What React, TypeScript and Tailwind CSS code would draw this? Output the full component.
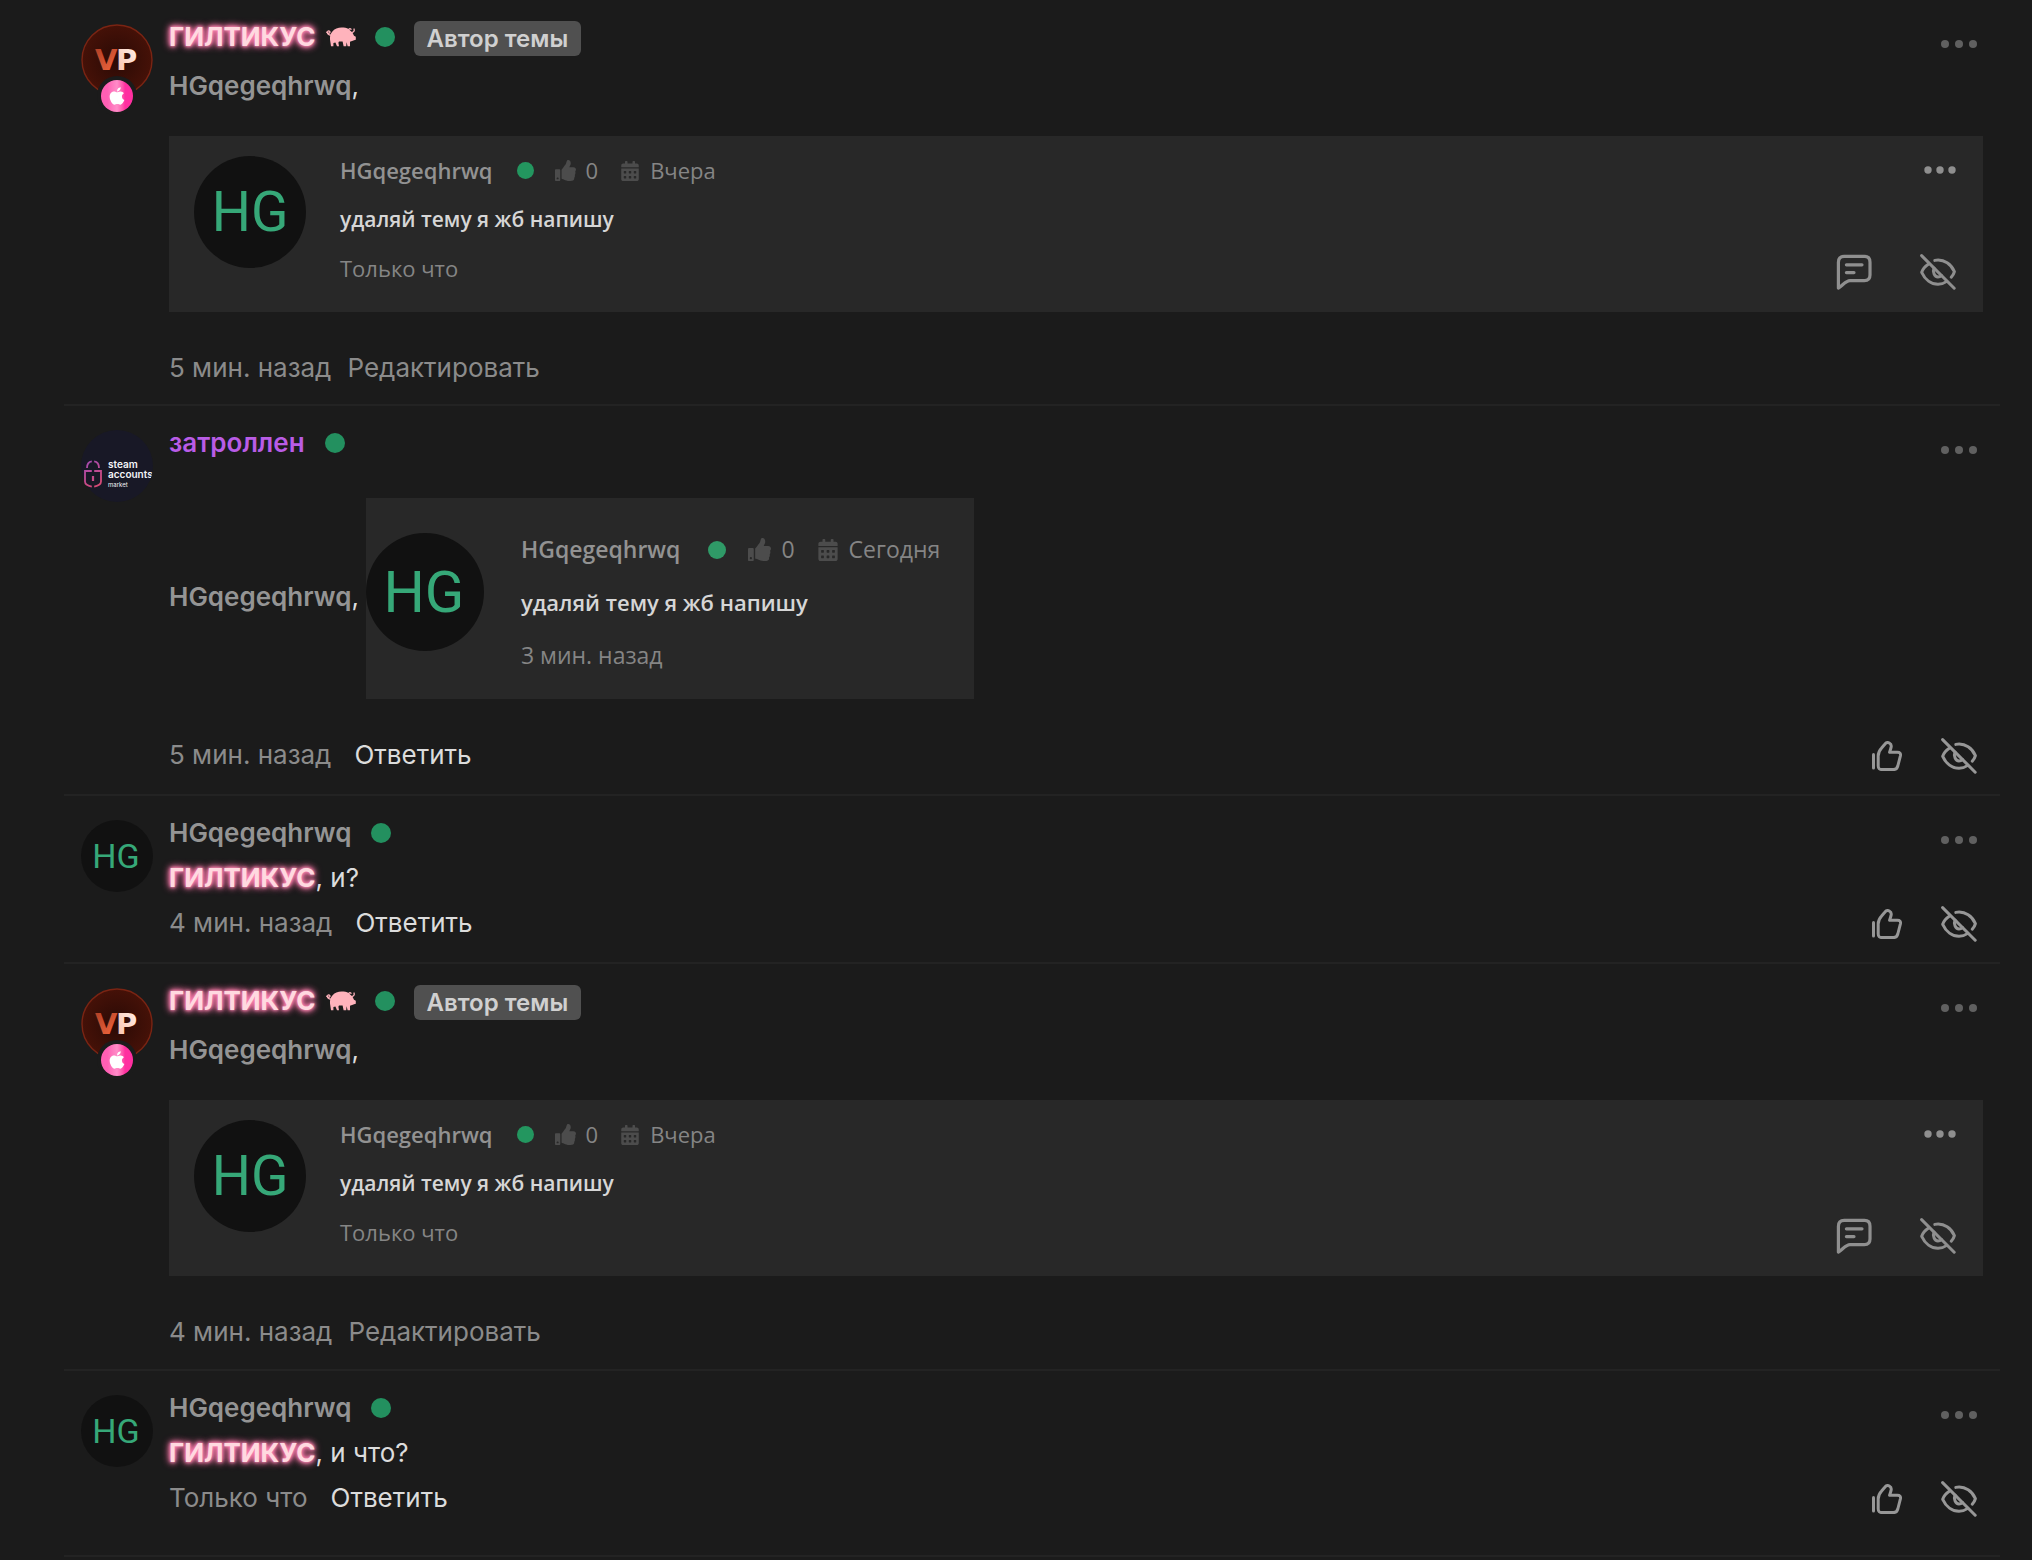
import React from "react";
import { FaApple, FaCalendarAlt, FaThumbsUp } from "react-icons/fa";

function EyeOffIcon() {
  return (
    <svg viewBox="0 0 36 36" className="size-9" fill="none" stroke="currentColor" strokeWidth="3" strokeLinecap="round" strokeLinejoin="round" aria-hidden="true">
      <path d="M1.6 1.6 34.2 34.2" />
      <path d="M14.8 6.4C24.5 4.6 31.5 11 34.4 17.6C34 19.5 32.8 21.4 31.2 23.2" />
      <path d="M8.6 10C5.3 12.2 2.6 15.4 1.7 18.3C5 25.6 11.2 30.2 18 30.2C21.3 30.2 24.3 29.2 26.8 27.4" />
      <path d="M14 14.2C12.4 17.8 14.4 22.9 18 22.9C19.5 22.9 20.6 22.4 21.6 21.6" />
    </svg>
  );
}

function ThumbIcon() {
  return (
    <svg viewBox="0 0 30 30" className="size-[30px]" fill="none" stroke="currentColor" strokeWidth="3" strokeLinecap="round" strokeLinejoin="round" aria-hidden="true">
      <path d="M1.5 13.5V27" />
      <path d="M6.2 15C6.2 11.5 7.2 9.6 9.6 7L13 3C14.2 1.5 15.8 1.2 17.3 2C19.2 3 19.6 4.6 19 6.8L17.6 11.2H25.4C27.9 11.2 28.9 12.4 28.4 14.8L25.8 25C25 27.8 24 28.6 21.4 28.6H10.4C7.4 28.6 6.2 27.6 6.2 24.8Z" />
    </svg>
  );
}

function MessageIcon() {
  return (
    <svg viewBox="0 0 36 36" className="size-9" fill="none" stroke="currentColor" strokeWidth="3.2" strokeLinecap="round" strokeLinejoin="round" aria-hidden="true">
      <path d="M2.4 34V8.4C2.4 4.4 4.4 2.4 8.2 2.4H28.4C32.2 2.4 34 4.4 34 8.2V21C34 24.8 32.2 26.6 28.4 26.6H14C9.6 26.6 6.4 31.8 2.4 34Z" />
      <path d="M10.4 10.8H26M10.4 18.6H18" />
    </svg>
  );
}

function DotsIcon() {
  return (
    <svg viewBox="0 0 36 8" className="h-2 w-9" fill="currentColor" aria-hidden="true">
      <circle cx="4" cy="4" r="4" />
      <circle cx="18" cy="4" r="4" />
      <circle cx="32" cy="4" r="4" />
    </svg>
  );
}

function PigIcon() {
  return (
    <svg viewBox="0 0 30 20" className="h-5 w-[30px] shrink-0" fill="#ffb3bc" aria-hidden="true">
      <path d="M6 5C8.5 1.8 12 .6 15.6.6C18.4.6 20.6 1 22.6 2L24.4 3.8L26.4 5.6L28 8.8L29.8 9.8V12.8L27.4 13.6L24 14.8V19.2H21.6L20.6 15.2L20.2 19.2H17.6L16.6 14.4H13L12.4 15.8L13 19.2H11L9.4 15.4L7.4 16V19.2H5L4 12.6C3.8 9.4 4.4 7 6 5Z" />
      <path d="M5.6 8C3 8.6.8 6.6 1.6 4.8C2.4 3.2 4.6 4.2 3.8 5.6C3.2 6.6 1.4 6.2.6 5.2M22.4 3.4C22.6 1.8 24 1.2 25 2.2M26.2 5.4C27.8 5.2 28.6 3.8 28 2" fill="none" stroke="#ffb3bc" strokeWidth="1.3" strokeLinecap="round" />
    </svg>
  );
}

function OnlineDot() {
  return <span className="block size-5 shrink-0 rounded-full bg-[#23905f]" role="img" aria-label="В сети" />;
}

function HgAvatar() {
  return (
    <a href="#hg" className="flex size-[72px] items-center justify-center rounded-full bg-[#111111] pr-0.5 font-['Roboto',sans-serif] text-[34px] text-[#36a878]">
      HG
    </a>
  );
}

function VpAvatar() {
  return (
    <a href="#giltikus" aria-label="ГИЛТИКУС" className="relative block size-[72px]">
      <svg viewBox="0 0 72 72" className="size-[72px]" aria-hidden="true">
        <defs>
          <radialGradient id="vpBack" cx="50%" cy="50%" r="55%">
            <stop offset="0" stopColor="#2a0a05" />
            <stop offset="1" stopColor="#481208" />
          </radialGradient>
          <linearGradient id="vpV" x1="0" y1="0" x2="0.6" y2="1">
            <stop offset="0" stopColor="#a83a22" />
            <stop offset="1" stopColor="#f0663e" />
          </linearGradient>
          <linearGradient id="vpP" x1="0" y1="1" x2="1" y2="0">
            <stop offset="0" stopColor="#f9bda6" />
            <stop offset="1" stopColor="#fff3ee" />
          </linearGradient>
        </defs>
        <circle cx="36" cy="36" r="35" fill="url(#vpBack)" stroke="#7a2413" strokeWidth="1.4" />
        <g fontFamily="DejaVu Sans" fontWeight="700" fontSize="29">
          <text x="14" y="46" fill="url(#vpV)">V</text>
          <text x="35" y="46" fill="url(#vpP)">P</text>
        </g>
      </svg>
      <span className="absolute top-[52px] left-4 flex size-10 items-center justify-center rounded-full bg-[#1b1b1b]">
        <span className="flex size-8 items-center justify-center rounded-full bg-linear-to-r from-[#ff5fb4] from-20% via-[#ff8cc8] to-[#ff2fa0] to-75% text-xl text-white">
          <FaApple aria-hidden="true" />
        </span>
      </span>
    </a>
  );
}

function SteamAvatar() {
  return (
    <a href="#zatrollen" aria-label="затроллен" className="block size-[72px]">
      <svg viewBox="0 0 72 72" className="size-[72px]" aria-hidden="true">
        <defs>
          <clipPath id="steamRound">
            <circle cx="36" cy="36" r="36" />
          </clipPath>
          <linearGradient id="steamLock" x1="3" y1="30" x2="21" y2="58" gradientUnits="userSpaceOnUse">
            <stop offset="0" stopColor="#a04bb8" />
            <stop offset="1" stopColor="#e04a6c" />
          </linearGradient>
        </defs>
        <circle cx="36" cy="36" r="36" fill="#181826" />
        <g fill="none" stroke="url(#steamLock)" strokeWidth="1.8">
          <path d="M6 38C6 34 7.8 31.8 10.8 31.4M13.2 31.4C16.2 31.8 18 34 18 38" />
          <path d="M10.8 41H4V51.6C4 53.8 6.4 55.8 10.8 56.6M13.2 41H20V51.6C20 53.8 17.6 55.8 13.2 56.6" />
          <path d="M12 46V51" strokeWidth="2.2" />
        </g>
        <g fill="#f4f4f8" fontFamily="Inter" clipPath="url(#steamRound)">
          <text x="27" y="38" fontSize="10" fontWeight="600">steam</text>
          <text x="27" y="48" fontSize="10" fontWeight="600">accounts</text>
          <text x="27" y="57" fontSize="6">market</text>
        </g>
      </svg>
    </a>
  );
}

function GlowName() {
  return (
    <a href="#giltikus" className="font-bold text-[#ffd9e0] [text-shadow:0_0_3px_#ff8fb8,0_0_5px_#ff7fae,0_0_7px_#ff78aa,0_0_9px_#f0689b]">
      ГИЛТИКУС
    </a>
  );
}

function GreyName() {
  return (
    <a href="#hg" className="font-semibold text-[#949494]">
      HGqegeqhrwq
    </a>
  );
}

function WideQuote() {
  return (
    <div className="flex gap-[34px] bg-[#282828] pt-2.5 pr-[27px] pb-[19px] pl-[25px] font-['Open_Sans','Noto_Sans',sans-serif] text-[22px]">
      <div className="mt-2.5 flex size-28 shrink-0 items-center justify-center rounded-full bg-[#111111] font-['Roboto',sans-serif] text-[55px] text-[#36a878]">HG</div>
      <div className="flex-1 leading-[49px] whitespace-nowrap text-[#858585]">
        <div className="flex items-center">
          <span className="font-semibold text-[#929292]">HGqegeqhrwq</span>
          <span className="ml-6 size-[17px] rounded-full bg-[#23965f]" />
          <FaThumbsUp className="ml-[21px] size-[21px] text-[#4c4c4c]" aria-hidden="true" />
          <span className="ml-2.5">0</span>
          <FaCalendarAlt className="ml-[22px] size-5 text-[#4c4c4c]" aria-hidden="true" />
          <span className="ml-2.5">Вчера</span>
        </div>
        <p className="text-[21px] leading-[49px] font-semibold text-[#d6d6d6]">удаляй тему я жб напишу</p>
        <p>Только что</p>
      </div>
      <div className="flex flex-col items-end justify-between pt-5 pb-[3px] text-[#8f8f8f]">
        <svg viewBox="0 0 32 8" className="h-2 w-8" fill="currentColor" aria-hidden="true">
          <circle cx="4" cy="4" r="3.7" />
          <circle cx="16" cy="4" r="3.7" />
          <circle cx="28" cy="4" r="3.7" />
        </svg>
        <div className="flex gap-12">
          <MessageIcon />
          <EyeOffIcon />
        </div>
      </div>
    </div>
  );
}

function NarrowQuote() {
  return (
    <div className="flex w-[608px] gap-[37px] bg-[#282828] pt-[25px] pb-[17px] font-['Open_Sans','Noto_Sans',sans-serif] text-[23px]">
      <div className="mt-2.5 flex size-[118px] shrink-0 items-center justify-center rounded-full bg-[#111111] pr-0.5 font-['Roboto',sans-serif] text-[58px] text-[#36a878]">HG</div>
      <div className="leading-[53px] whitespace-nowrap text-[#858585]">
        <div className="flex items-center">
          <span className="font-semibold text-[#929292]">HGqegeqhrwq</span>
          <span className="ml-7 size-[18px] rounded-full bg-[#2f9a67]" />
          <FaThumbsUp className="ml-[22px] size-[23px] text-[#4c4c4c]" aria-hidden="true" />
          <span className="ml-2.5">0</span>
          <FaCalendarAlt className="ml-[22px] size-[22px] text-[#4c4c4c]" aria-hidden="true" />
          <span className="ml-2.5">Сегодня</span>
        </div>
        <p className="text-[22px] leading-[53px] font-semibold text-[#d6d6d6]">удаляй тему я жб напишу</p>
        <p>3 мин. назад</p>
      </div>
    </div>
  );
}

type CommentProps = {
  avatar: React.ReactNode;
  name: React.ReactNode;
  time: string;
  own?: boolean;
  className: string;
  children: React.ReactNode;
};

function Comment({ avatar, name, time, own, className, children }: CommentProps) {
  return (
    <article className={`flex border-t-2 border-[#232323] pt-3.5 pr-[17px] pl-[17px] ${className}`}>
      <div className="mt-2.5 mr-4 shrink-0">{avatar}</div>
      <div className="min-w-0 flex-1">
        <header className="flex h-[45px] items-center">
          {name}
          <button type="button" aria-label="Меню" className="mt-3.5 mr-1.5 ml-auto flex h-8 items-center text-[#606060]">
            <DotsIcon />
          </button>
        </header>
        {children}
        <footer className="flex h-[45px] items-center text-[#8b8b8b]">
          <time>{time}</time>
          {own ? (
            <button type="button" className="ml-4">Редактировать</button>
          ) : (
            <>
              <button type="button" className="ml-[23px] text-[#dcdcdc]">Ответить</button>
              <div className="mt-0.5 mr-1.5 ml-auto flex items-center gap-[39px] text-[#979797]">
                <button type="button" aria-label="Нравится"><ThumbIcon /></button>
                <button type="button" aria-label="Скрыть"><EyeOffIcon /></button>
              </div>
            </>
          )}
        </footer>
      </div>
    </article>
  );
}

function AuthorComment({ time, className }: { time: string; className: string }) {
  return (
    <Comment
      avatar={<VpAvatar />}
      time={time}
      own
      className={className}
      name={
        <>
          <GlowName />
          <span className="mr-[19px] ml-2.5"><PigIcon /></span>
          <OnlineDot />
          <span className="mt-1 ml-[19px] rounded-md bg-[#505050] px-[13px] text-[24px] leading-[35px] font-semibold text-[#d0d0d0]">Автор темы</span>
        </>
      }
    >
      <p className="mt-1"><GreyName />,</p>
      <div className="mt-7 mb-[33px]"><WideQuote /></div>
    </Comment>
  );
}

function HgComment({ time, text, className }: { time: string; text: string; className: string }) {
  return (
    <Comment
      avatar={<HgAvatar />}
      time={time}
      className={className}
      name={<><GreyName /><span className="ml-5"><OnlineDot /></span></>}
    >
      <p><GlowName />, {text}</p>
    </Comment>
  );
}

export default function App() {
  return (
    <main className="flow-root min-h-screen bg-[#1b1b1b] pr-8 pl-16 font-['Inter',sans-serif] text-[26px] leading-[45px] text-[#dcdcdc]">
      <section className="-mt-0.5 border-b-2 border-[#232323]">
        <AuthorComment time="5 мин. назад" className="pb-3.5" />
        <Comment
          avatar={<SteamAvatar />}
          time="5 мин. назад"
          className="pb-[17px]"
          name={
            <>
              <a href="#zatrollen" className="font-semibold text-[#b95ce6]">затроллен</a>
              <span className="ml-5"><OnlineDot /></span>
            </>
          }
        >
          <div className="my-[33px] flex items-center gap-[7px]">
            <p className="pb-1"><GreyName />,</p>
            <NarrowQuote />
          </div>
        </Comment>
        <HgComment time="4 мин. назад" text="и?" className="pb-[17px]" />
        <AuthorComment time="4 мин. назад" className="pb-[15px]" />
        <HgComment time="Только что" text="и что?" className="pb-[35px]" />
      </section>
    </main>
  );
}
